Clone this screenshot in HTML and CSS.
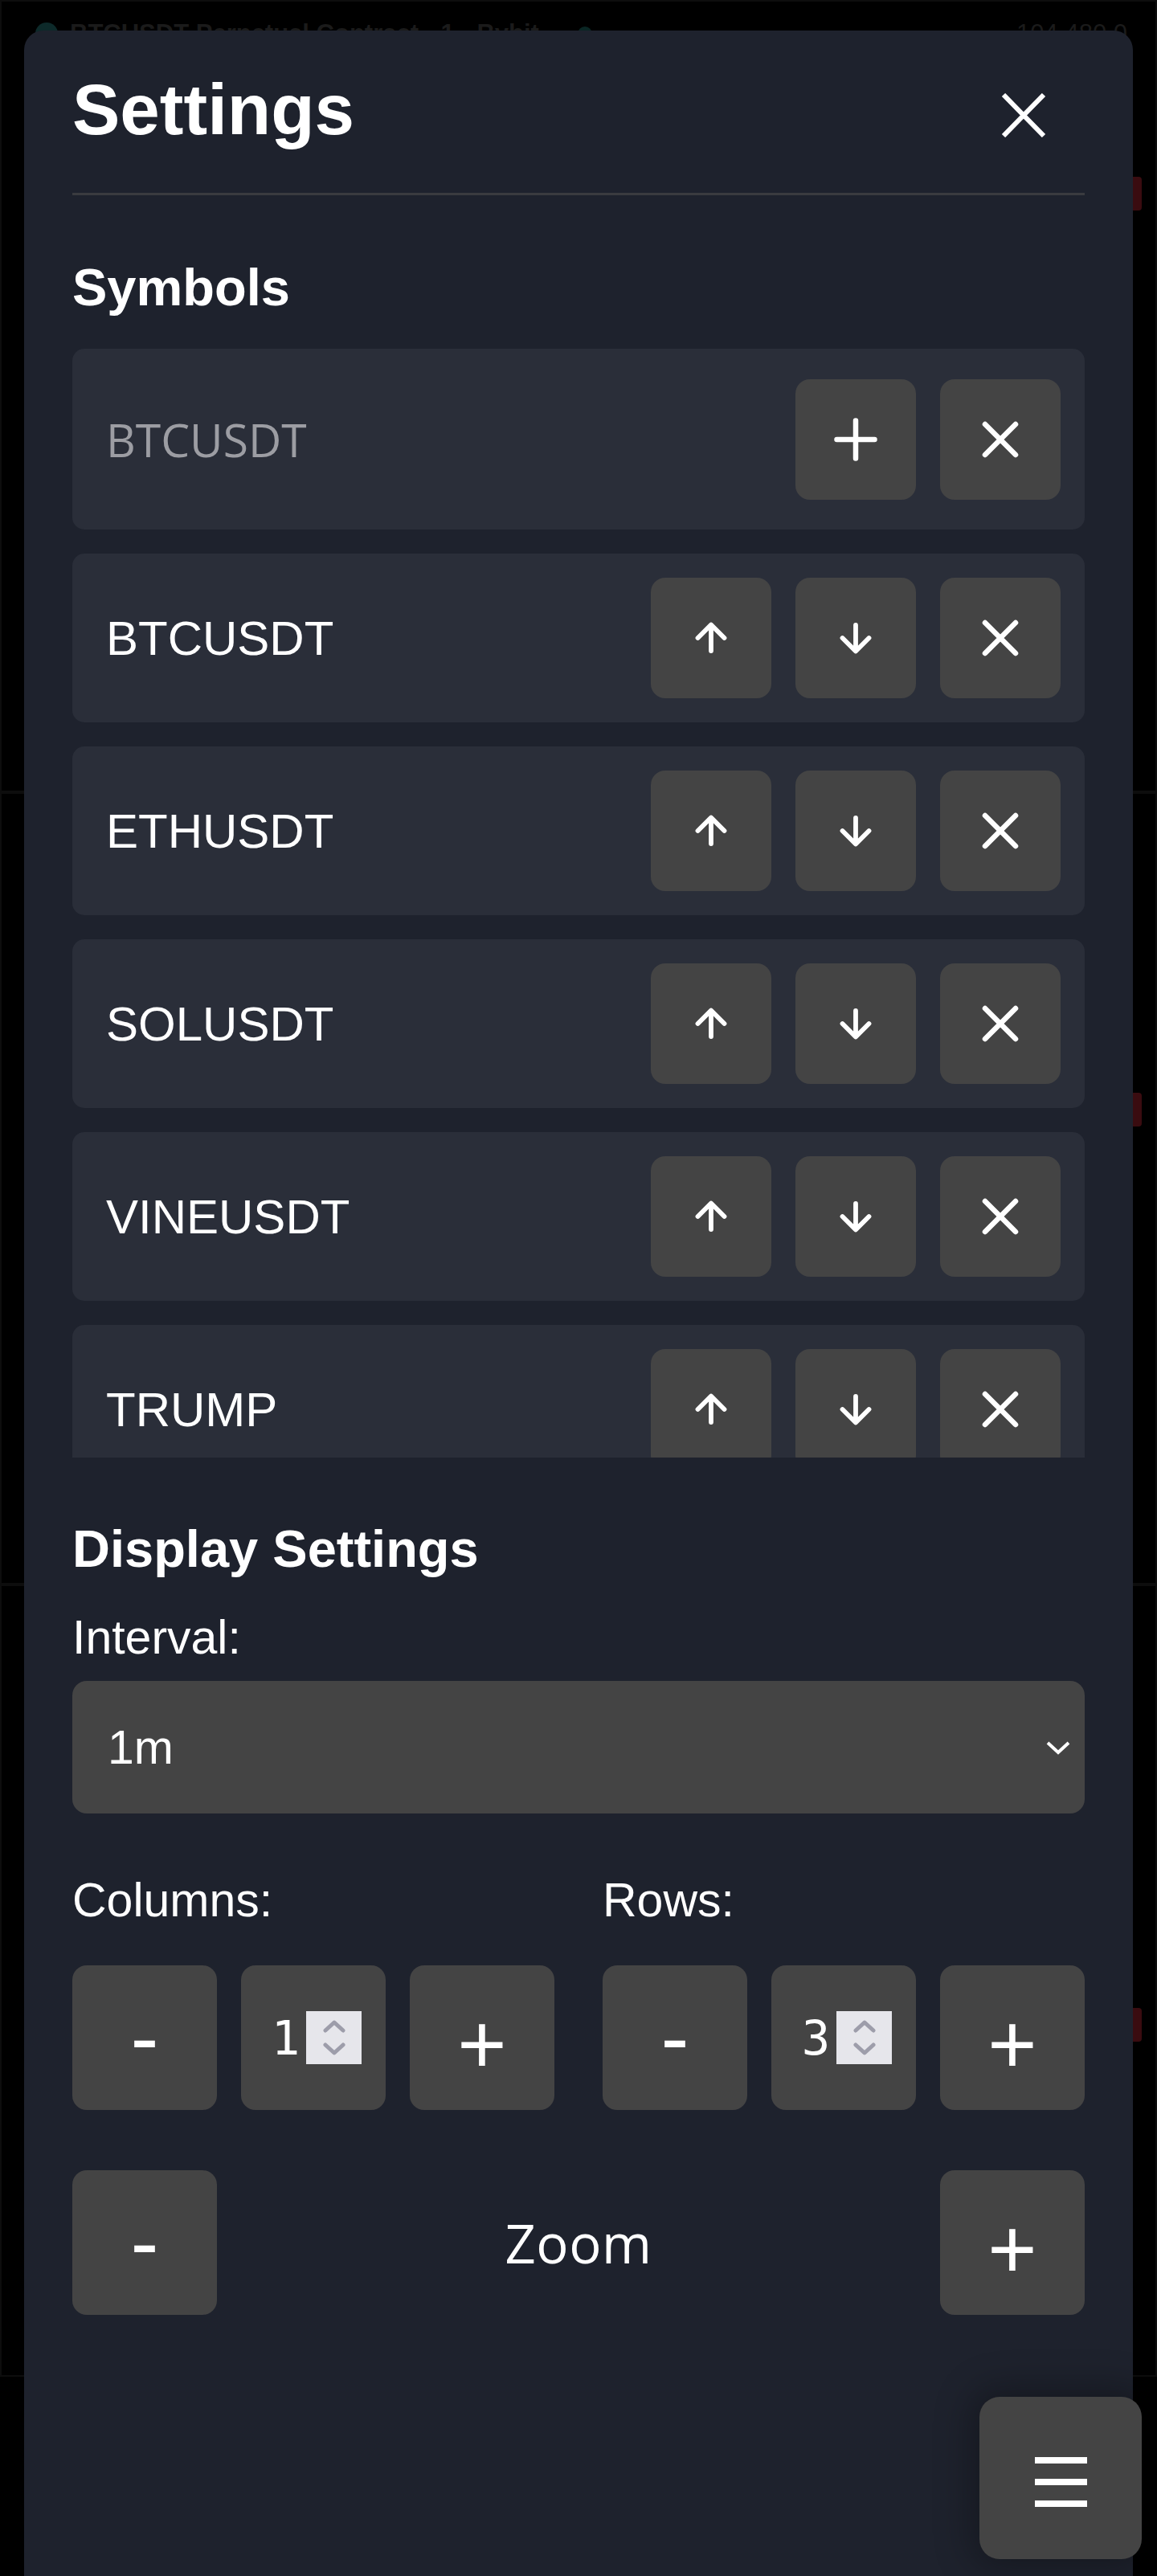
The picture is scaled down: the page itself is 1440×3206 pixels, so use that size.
FILE: index.html
```html
<!DOCTYPE html>
<html lang="en">
<head>
<meta charset="utf-8">
<title>Settings</title>
<link rel="stylesheet" href="styles.css">
</head>
<body>
<div class="backdrop">
  <div class="chart-cell">
    <div class="chart-head">
      <span class="chart-logo"></span>
      <span class="chart-title">BTCUSDT Perpetual Contract · 1 · Bybit</span>
      <span class="chart-dot"></span>
      <span class="chart-price">104,480.0</span>
    </div>
    <span class="price-tag tag-a"></span>
  </div>
  <div class="chart-cell"><span class="price-tag tag-b"></span></div>
  <div class="chart-cell"><span class="price-tag tag-c"></span></div>
</div>

<div class="panel">
  <div class="panel-header">
    <h2 class="panel-title">Settings</h2>
    <button class="close-btn" aria-label="Close">
      <svg width="56" height="55" viewBox="0 0 56 55"><path d="M3 2 L53 53 M53 2 L3 53" stroke="#fff" stroke-width="6" fill="none"/></svg>
    </button>
  </div>

  <h3 class="section-title">Symbols</h3>
  <div class="symbol-list">
    <div class="symbol-row">
      <input class="symbol-input" type="text" placeholder="BTCUSDT">
      <button class="icon-btn" aria-label="Add"><svg width="56" height="56" viewBox="0 0 56 56"><path d="M28 4.5 V51.5 M4.5 28 H51.5" stroke="#fff" stroke-width="6.5" stroke-linecap="round" fill="none"/></svg></button>
      <button class="icon-btn" aria-label="Clear"><svg width="48" height="48" viewBox="0 0 48 48"><path d="M5 5 L43 43 M43 5 L5 43" stroke="#fff" stroke-width="6.5" stroke-linecap="round" fill="none"/></svg></button>
    </div>

    <div class="symbol-row">
      <span class="symbol-name">BTCUSDT</span>
      <button class="icon-btn" aria-label="Up"><svg class="i-arrow" viewBox="0 0 40 40"><path d="M20 36 V4 M3.5 20 L20 3.5 L36.5 20" stroke="#fff" stroke-width="5.8" stroke-linecap="round" stroke-linejoin="round" fill="none"/></svg></button>
      <button class="icon-btn" aria-label="Down"><svg class="i-arrow" viewBox="0 0 40 40"><path d="M20 4 V36 M3.5 20 L20 36.5 L36.5 20" stroke="#fff" stroke-width="5.8" stroke-linecap="round" stroke-linejoin="round" fill="none"/></svg></button>
      <button class="icon-btn" aria-label="Remove"><svg width="48" height="48" viewBox="0 0 48 48"><path d="M5 5 L43 43 M43 5 L5 43" stroke="#fff" stroke-width="6.5" stroke-linecap="round" fill="none"/></svg></button>
    </div>

    <div class="symbol-row">
      <span class="symbol-name">ETHUSDT</span>
      <button class="icon-btn" aria-label="Up"><svg class="i-arrow" viewBox="0 0 40 40"><path d="M20 36 V4 M3.5 20 L20 3.5 L36.5 20" stroke="#fff" stroke-width="5.8" stroke-linecap="round" stroke-linejoin="round" fill="none"/></svg></button>
      <button class="icon-btn" aria-label="Down"><svg class="i-arrow" viewBox="0 0 40 40"><path d="M20 4 V36 M3.5 20 L20 36.5 L36.5 20" stroke="#fff" stroke-width="5.8" stroke-linecap="round" stroke-linejoin="round" fill="none"/></svg></button>
      <button class="icon-btn" aria-label="Remove"><svg width="48" height="48" viewBox="0 0 48 48"><path d="M5 5 L43 43 M43 5 L5 43" stroke="#fff" stroke-width="6.5" stroke-linecap="round" fill="none"/></svg></button>
    </div>

    <div class="symbol-row">
      <span class="symbol-name">SOLUSDT</span>
      <button class="icon-btn" aria-label="Up"><svg class="i-arrow" viewBox="0 0 40 40"><path d="M20 36 V4 M3.5 20 L20 3.5 L36.5 20" stroke="#fff" stroke-width="5.8" stroke-linecap="round" stroke-linejoin="round" fill="none"/></svg></button>
      <button class="icon-btn" aria-label="Down"><svg class="i-arrow" viewBox="0 0 40 40"><path d="M20 4 V36 M3.5 20 L20 36.5 L36.5 20" stroke="#fff" stroke-width="5.8" stroke-linecap="round" stroke-linejoin="round" fill="none"/></svg></button>
      <button class="icon-btn" aria-label="Remove"><svg width="48" height="48" viewBox="0 0 48 48"><path d="M5 5 L43 43 M43 5 L5 43" stroke="#fff" stroke-width="6.5" stroke-linecap="round" fill="none"/></svg></button>
    </div>

    <div class="symbol-row">
      <span class="symbol-name">VINEUSDT</span>
      <button class="icon-btn" aria-label="Up"><svg class="i-arrow" viewBox="0 0 40 40"><path d="M20 36 V4 M3.5 20 L20 3.5 L36.5 20" stroke="#fff" stroke-width="5.8" stroke-linecap="round" stroke-linejoin="round" fill="none"/></svg></button>
      <button class="icon-btn" aria-label="Down"><svg class="i-arrow" viewBox="0 0 40 40"><path d="M20 4 V36 M3.5 20 L20 36.5 L36.5 20" stroke="#fff" stroke-width="5.8" stroke-linecap="round" stroke-linejoin="round" fill="none"/></svg></button>
      <button class="icon-btn" aria-label="Remove"><svg width="48" height="48" viewBox="0 0 48 48"><path d="M5 5 L43 43 M43 5 L5 43" stroke="#fff" stroke-width="6.5" stroke-linecap="round" fill="none"/></svg></button>
    </div>

    <div class="symbol-row">
      <span class="symbol-name">TRUMP</span>
      <button class="icon-btn" aria-label="Up"><svg class="i-arrow" viewBox="0 0 40 40"><path d="M20 36 V4 M3.5 20 L20 3.5 L36.5 20" stroke="#fff" stroke-width="5.8" stroke-linecap="round" stroke-linejoin="round" fill="none"/></svg></button>
      <button class="icon-btn" aria-label="Down"><svg class="i-arrow" viewBox="0 0 40 40"><path d="M20 4 V36 M3.5 20 L20 36.5 L36.5 20" stroke="#fff" stroke-width="5.8" stroke-linecap="round" stroke-linejoin="round" fill="none"/></svg></button>
      <button class="icon-btn" aria-label="Remove"><svg width="48" height="48" viewBox="0 0 48 48"><path d="M5 5 L43 43 M43 5 L5 43" stroke="#fff" stroke-width="6.5" stroke-linecap="round" fill="none"/></svg></button>
    </div>
  </div>

  <h3 class="section-title display-title">Display Settings</h3>
  <label class="field-label">Interval:</label>
  <div class="select">
    <span>1m</span>
    <svg width="32" height="20" viewBox="0 0 32 20"><path d="M3 4 L16 16 L29 4" stroke="#fff" stroke-width="4" fill="none"/></svg>
  </div>

  <div class="grid-controls">
    <div class="grid-group">
      <label class="field-label grid-label">Columns:</label>
      <div class="stepper">
        <button class="ctrl-btn minus">-</button>
        <div class="num-box">
          <span class="num-val">1</span>
          <span class="spin">
            <svg width="30" height="17" viewBox="0 0 30 17"><path d="M4 14 L15 4 L26 14" stroke="#9d9daa" stroke-width="5" stroke-linecap="round" stroke-linejoin="round" fill="none"/></svg>
            <svg width="30" height="17" viewBox="0 0 30 17"><path d="M4 3 L15 13 L26 3" stroke="#9d9daa" stroke-width="5" stroke-linecap="round" stroke-linejoin="round" fill="none"/></svg>
          </span>
        </div>
        <button class="ctrl-btn plus">+</button>
      </div>
    </div>
    <div class="grid-group">
      <label class="field-label grid-label">Rows:</label>
      <div class="stepper">
        <button class="ctrl-btn minus">-</button>
        <div class="num-box">
          <span class="num-val">3</span>
          <span class="spin">
            <svg width="30" height="17" viewBox="0 0 30 17"><path d="M4 14 L15 4 L26 14" stroke="#9d9daa" stroke-width="5" stroke-linecap="round" stroke-linejoin="round" fill="none"/></svg>
            <svg width="30" height="17" viewBox="0 0 30 17"><path d="M4 3 L15 13 L26 3" stroke="#9d9daa" stroke-width="5" stroke-linecap="round" stroke-linejoin="round" fill="none"/></svg>
          </span>
        </div>
        <button class="ctrl-btn plus">+</button>
      </div>
    </div>
  </div>

  <div class="zoom-row">
    <button class="ctrl-btn minus">-</button>
    <span class="zoom-label">Zoom</span>
    <button class="ctrl-btn plus">+</button>
  </div>
</div>

<button class="menu-btn" aria-label="Menu">
  <span class="bar"></span><span class="bar"></span><span class="bar"></span>
</button>
</body>
</html>
```

FILE: styles.css
```css
* { box-sizing: border-box; }

html, body {
  margin: 0;
  padding: 0;
}

body {
  width: 1440px;
  height: 3206px;
  overflow: hidden;
  position: relative;
  background: #000;
  color: #fff;
  font-family: "Liberation Sans", Arial, sans-serif;
}

/* ---------- dimmed chart backdrop ---------- */
.backdrop {
  display: flex;
  flex-direction: column;
}

.chart-cell {
  position: relative;
  height: 986px;
  border: 2px solid #0d0d0d;
}

.chart-head {
  display: flex;
  align-items: center;
  padding: 24px 35px 0 42px;
  font-size: 31px;
  line-height: 31px;
  color: #1b1b1b;
}

.chart-logo {
  width: 28px;
  height: 28px;
  border-radius: 50%;
  background: #0d2a2a;
  margin-right: 15px;
}

.chart-title {
  font-weight: bold;
}

.chart-dot {
  width: 18px;
  height: 18px;
  border-radius: 50%;
  background: #0a2624;
  margin-left: 48px;
}

.chart-price {
  margin-left: auto;
}

.price-tag {
  position: absolute;
  right: 17px;
  width: 40px;
  height: 42px;
  background: #3a0c10;
  border-radius: 4px;
}

.tag-a { top: 218px; }
.tag-b { top: 372px; }
.tag-c { top: 525px; }

/* ---------- settings panel ---------- */
.panel {
  position: absolute;
  top: 38px;
  left: 30px;
  width: 1380px;
  height: 3220px;
  padding: 53px 60px 0;
  background: #1e222d;
  border-radius: 24px;
}

.panel-header {
  display: flex;
  justify-content: space-between;
  align-items: flex-start;
  padding-bottom: 59px;
  border-bottom: 3px solid #3a3b3f;
}

.panel-title {
  margin: 0;
  font-size: 89px;
  line-height: 90px;
  font-weight: bold;
}

.close-btn {
  margin: 25px 48px 0 0;
  padding: 0;
  border: 0;
  background: none;
  display: flex;
}

.section-title {
  margin: 82px 0 44px;
  font-size: 65px;
  line-height: 65px;
  font-weight: bold;
}

.display-title {
  margin: 81px 0 49px;
}

/* symbol list */
.symbol-list {
  height: 1380px;
  overflow: hidden;
  display: flex;
  flex-direction: column;
  gap: 30px;
}

.symbol-row {
  flex-shrink: 0;
  display: flex;
  align-items: center;
  gap: 30px;
  padding: 30px;
  background: #2a2e39;
  border-radius: 15px;
}

.symbol-input {
  flex: 1;
  min-width: 0;
  height: 165px;
  padding: 0 0 0 12px;
  border: 0;
  outline: none;
  background: transparent;
  color: #fff;
  font-family: "Open Sans", "Noto Sans", sans-serif;
  font-size: 57px;
}

.symbol-input::placeholder {
  color: #9c9da3;
}

.symbol-name {
  flex: 1;
  padding-left: 12px;
  font-size: 60px;
}

.icon-btn {
  flex-shrink: 0;
  width: 150px;
  height: 150px;
  padding: 0;
  border: 0;
  border-radius: 18px;
  background: #444;
  display: flex;
  align-items: center;
  justify-content: center;
}

.i-arrow {
  width: 40px;
  height: 40px;
}

/* display settings */
.field-label {
  display: block;
  margin-bottom: 24px;
  font-size: 59px;
  line-height: 59px;
}

.select {
  height: 165px;
  display: flex;
  align-items: center;
  justify-content: space-between;
  padding: 0 17px 0 44px;
  background: #444;
  border-radius: 18px;
  font-size: 59px;
}

.grid-controls {
  display: grid;
  grid-template-columns: 1fr 1fr;
  gap: 60px;
  margin-top: 79px;
}

.grid-label {
  margin-bottom: 51px;
}

.stepper {
  display: flex;
  gap: 30px;
}

.ctrl-btn {
  width: 180px;
  height: 180px;
  padding: 0;
  border: 0;
  border-radius: 18px;
  background: #444;
  color: #fff;
  font-family: "Liberation Sans", Arial, sans-serif;
  font-size: 105px;
  line-height: 180px;
  text-align: center;
}

.ctrl-btn.plus {
  padding-top: 8px;
}

.num-box {
  width: 180px;
  height: 180px;
  display: flex;
  align-items: center;
  padding: 0 30px;
  background: #444;
  border-radius: 18px;
}

.num-val {
  flex: 1;
  text-align: center;
  font-family: "DejaVu Sans Mono", "Liberation Mono", monospace;
  font-size: 59px;
}

.spin {
  width: 69px;
  height: 66px;
  background: #e6e6eb;
  display: flex;
  flex-direction: column;
  align-items: center;
  justify-content: center;
  gap: 12px;
}

.zoom-row {
  display: flex;
  justify-content: space-between;
  align-items: center;
  margin-top: 75px;
}

.zoom-label {
  font-family: "Open Sans", "Noto Sans", sans-serif;
  font-size: 67px;
  letter-spacing: 0.5px;
}

/* floating menu button */
.menu-btn {
  position: absolute;
  right: 19px;
  bottom: 21px;
  width: 202px;
  height: 202px;
  padding: 9px 0 0;
  border: 0;
  border-radius: 25px;
  background: #444;
  box-shadow: 0 0 45px 12px rgba(0, 0, 0, 0.28);
  display: flex;
  flex-direction: column;
  align-items: center;
  justify-content: center;
  gap: 19px;
}

.bar {
  width: 65px;
  height: 8px;
  background: #fff;
}
```
